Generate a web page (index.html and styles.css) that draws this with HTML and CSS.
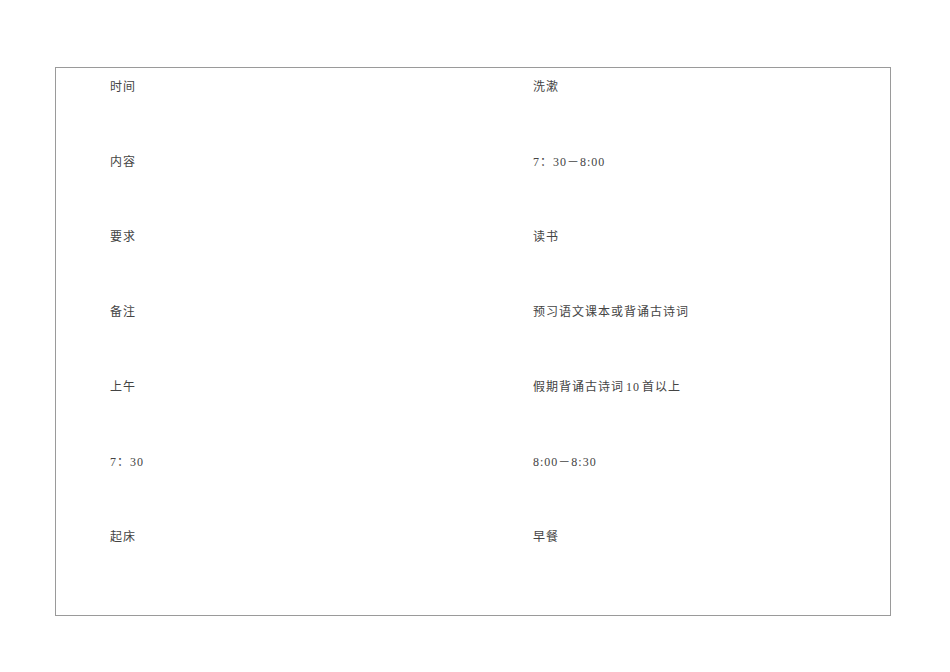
FILE: index.html
```html
<!DOCTYPE html>
<html lang="zh">
<head>
<meta charset="utf-8">
<link rel="stylesheet" href="styles.css">
</head>
<body>
<div class="sheet">
  <div class="cell">时间</div><div class="cell">洗漱</div>
  <div class="cell">内容</div><div class="cell">7：30－8:00</div>
  <div class="cell">要求</div><div class="cell">读书</div>
  <div class="cell">备注</div><div class="cell">预习语文课本或背诵古诗词</div>
  <div class="cell">上午</div><div class="cell">假期背诵古诗词<span class="num">10</span>首以上</div>
  <div class="cell">7：30</div><div class="cell">8:00－8:30</div>
  <div class="cell">起床</div><div class="cell">早餐</div>
</div>
</body>
</html>
```
FILE: styles.css
```css
html, body {
  margin: 0;
  padding: 0;
  background: #ffffff;
}
.sheet {
  box-sizing: border-box;
  margin: 67px 0 0 55px;
  width: 836px;
  height: 549px;
  border: 1px solid #9a9a9a;
  display: grid;
  grid-template-columns: 423px 1fr;
  grid-auto-rows: 75px;
  align-content: start;
  padding: 11px 0 0 54px;
  font-family: "Liberation Serif", "Noto Sans CJK SC", serif;
  font-size: 12px;
  line-height: 16px;
  color: #444444;
}
.cell {
  white-space: nowrap;
  letter-spacing: 1px;
}
.num {
  margin: 0 2px;
}
```
